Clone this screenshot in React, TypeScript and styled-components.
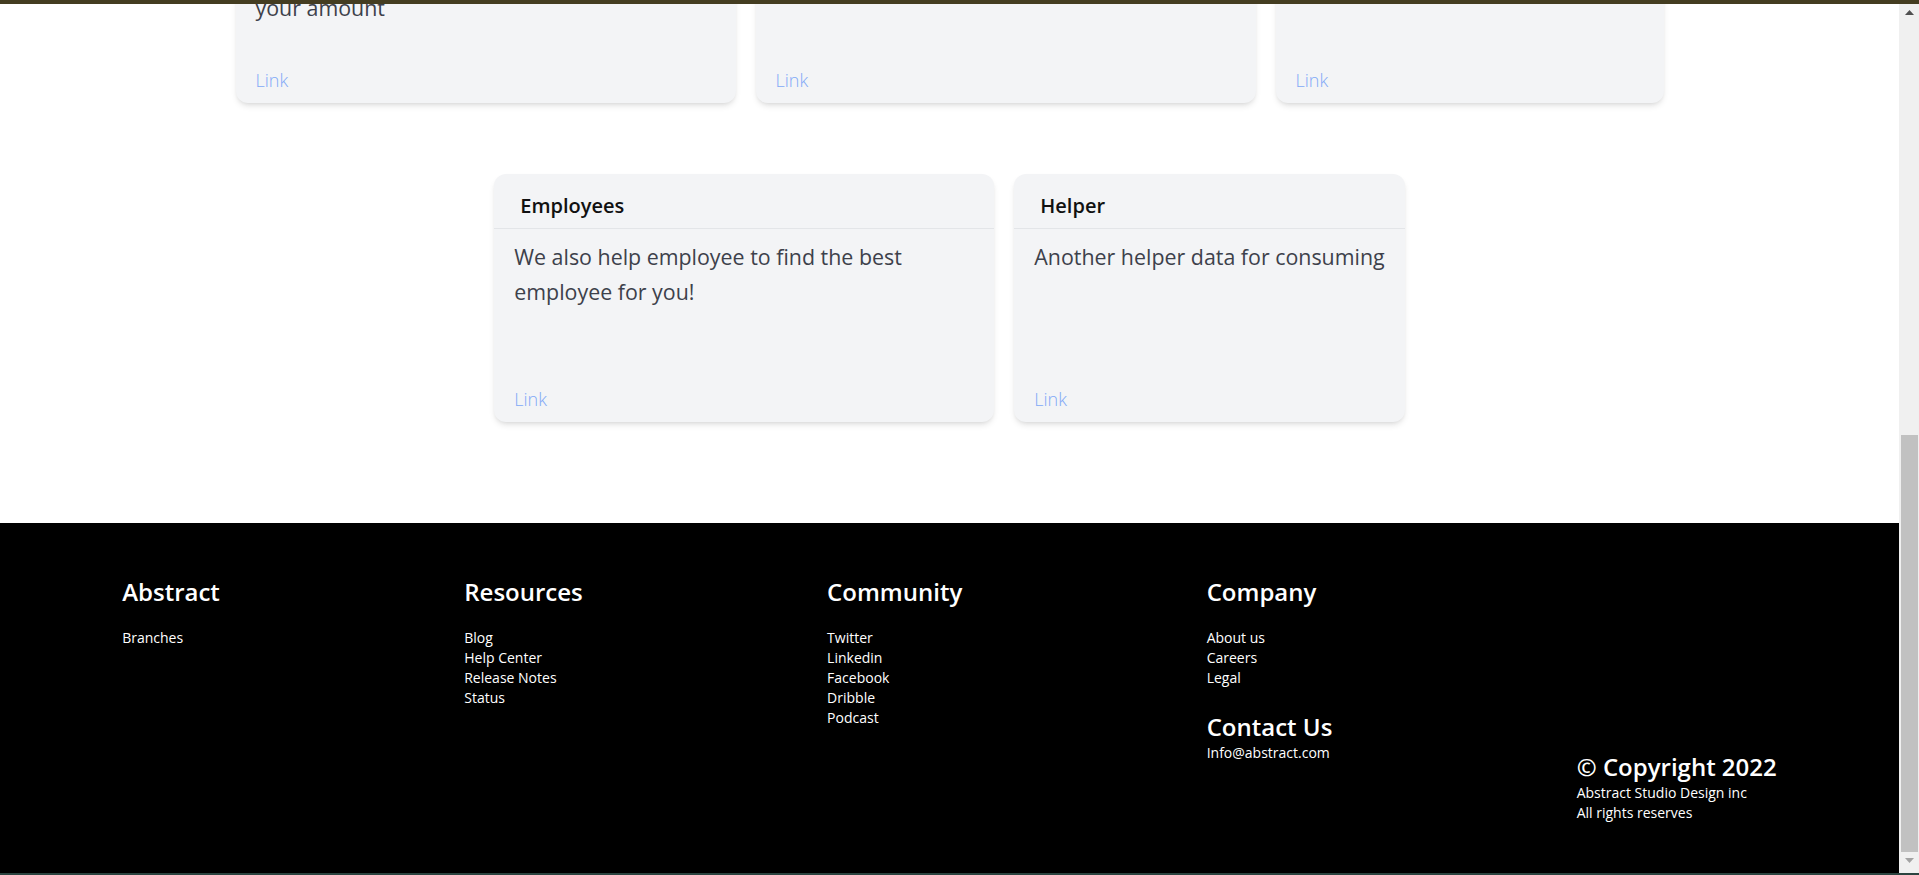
import React from 'react';
import styled, { createGlobalStyle } from 'styled-components';

const GlobalStyle = createGlobalStyle`
  html, body {
    margin: 0;
    padding: 0;
    height: 100%;
    overflow: hidden;
    background: #ffffff;
  }
  body {
    font-family: 'Segoe UI', 'Open Sans', 'Noto Sans', sans-serif;
  }
  * {
    box-sizing: border-box;
  }
`;

const Screen = styled.div`
  width: 1919px;
  height: 875px;
  display: flex;
  flex-direction: column;
`;

const TopEdge = styled.div`
  flex-shrink: 0;
  height: 4px;
  background: #443d21;
`;

const BottomEdge = styled.div`
  flex-shrink: 0;
  height: 2px;
  background: #2b4440;
`;

const Window = styled.div`
  flex: 1;
  min-height: 0;
  display: flex;
`;

/* content is anchored to the bottom: the page is scrolled to its end */
const Viewport = styled.main`
  flex: 1;
  min-width: 0;
  display: flex;
  flex-direction: column;
  justify-content: flex-end;
  overflow: hidden;
  background: #ffffff;
  > * {
    flex-shrink: 0;
  }
`;

const Scrollbar = styled.div`
  width: 20px;
  flex-shrink: 0;
  display: flex;
  flex-direction: column;
  background: #f0f0f0;
`;

const ScrollArrow = styled.div<{ $muted?: boolean }>`
  height: 17px;
  display: flex;
  align-items: ${p => (p.$muted ? 'flex-start' : 'center')};
  justify-content: center;
  padding-top: ${p => (p.$muted ? '2px' : '0')};
  color: ${p => (p.$muted ? '#a3a3a3' : '#505050')};
`;

const ScrollTrack = styled.div`
  flex: 1;
  display: flex;
  flex-direction: column;
  justify-content: flex-end;
  padding: 0 1px 4px 2px;
`;

const ScrollThumb = styled.div<{ $size: number }>`
  height: ${p => p.$size}px;
  background: #c1c1c1;
`;

const Services = styled.section`
  width: 100%;
  max-width: 1460px;
  margin: 0 auto;
  padding: 40px 0 101px;
  display: flex;
  flex-wrap: wrap;
  justify-content: center;
  column-gap: 20px;
  row-gap: 71px;
`;

const Card = styled.article<{ $width?: number }>`
  width: ${p => (p.$width ? `${p.$width}px` : 'auto')};
  max-width: 500px;
  height: 248px;
  display: flex;
  flex-direction: column;
  background: #f3f4f6;
  border-radius: 12px;
  box-shadow: 0 4px 6px -1px rgba(0, 0, 0, 0.1), 0 2px 4px -2px rgba(0, 0, 0, 0.1);
`;

const CardHeader = styled.h2`
  margin: 0;
  padding: 18px 26px 8px;
  border-bottom: 1px solid #e3e5e8;
  font-size: 20px;
  line-height: 28px;
  font-weight: 600;
  color: #111111;
`;

const CardText = styled.p`
  flex: 1;
  margin: 0;
  padding: 10px 20px 0;
  font-size: 21.4px;
  line-height: 35px;
  font-weight: 400;
  color: #3d414b;
`;

const CardLink = styled.a`
  padding: 0 20px 9px;
  font-size: 18px;
  line-height: 28px;
  font-weight: 300;
  color: #82a9f6;
  text-decoration: none;
`;

const Footer = styled.footer`
  display: flex;
  justify-content: space-around;
  align-items: flex-start;
  padding: 53px 0 50px;
  background: #000000;
  color: #ffffff;
`;

const FooterColumn = styled.div<{ $offset?: number }>`
  display: flex;
  flex-direction: column;
  margin-top: ${p => p.$offset ?? 0}px;
`;

const FooterTitle = styled.h3<{ $gap?: number; $space?: number }>`
  margin: ${p => p.$space ?? 0}px 0 ${p => p.$gap ?? 20}px;
  font-size: 24px;
  line-height: 32px;
  font-weight: 600;
`;

const FooterLink = styled.a`
  display: block;
  font-size: 14px;
  line-height: 20px;
  color: #ffffff;
  text-decoration: none;
`;

const FooterNote = styled.span`
  display: block;
  font-size: 14px;
  line-height: 20px;
`;

const services = [
  {
    title: 'Calculation',
    width: 500,
    text: ['We help you to count the expenses and', 'taxes of your company and calculate', 'your amount'],
  },
  { title: 'Business', width: 500, text: ['Grow your business with the help of', 'our best experts'] },
  { title: 'Finance', width: 388, text: ['Manage all of your finance easily'] },
  { title: 'Employees', text: ['We also help employee to find the best employee for you!'] },
  { title: 'Helper', text: ['Another helper data for consuming'] },
];

const columns = [
  { title: 'Abstract', links: ['Branches'] },
  { title: 'Resources', links: ['Blog', 'Help Center', 'Release Notes', 'Status'] },
  { title: 'Community', links: ['Twitter', 'Linkedin', 'Facebook', 'Dribble', 'Podcast'] },
];

const Arrow = ({ down }: { down?: boolean }) => (
  <svg width="9" height="5" viewBox="0 0 9 5">
    <polygon points={down ? '0,0 9,0 4.5,5' : '0,5 9,5 4.5,0'} fill="currentColor" />
  </svg>
);

export default function App() {
  return (
    <Screen>
      <GlobalStyle />
      <TopEdge />
      <Window>
        <Viewport>
          <Services>
            {services.map(s => (
              <Card key={s.title} $width={s.width}>
                <CardHeader>{s.title}</CardHeader>
                <CardText>
                  {s.text.map((line, i) => (
                    <React.Fragment key={i}>
                      {i > 0 && <br />}
                      {line}
                    </React.Fragment>
                  ))}
                </CardText>
                <CardLink href="#">Link</CardLink>
              </Card>
            ))}
          </Services>
          <Footer>
            {columns.map(c => (
              <FooterColumn key={c.title}>
                <FooterTitle>{c.title}</FooterTitle>
                {c.links.map(l => (
                  <FooterLink key={l} href="#">{l}</FooterLink>
                ))}
              </FooterColumn>
            ))}
            <FooterColumn>
              <FooterTitle>Company</FooterTitle>
              <FooterLink href="#">About us</FooterLink>
              <FooterLink href="#">Careers</FooterLink>
              <FooterLink href="#">Legal</FooterLink>
              <FooterTitle $space={23} $gap={0}>Contact Us</FooterTitle>
              <FooterLink href="#">Info@abstract.com</FooterLink>
            </FooterColumn>
            <FooterColumn $offset={175}>
              <FooterTitle $gap={0}>© Copyright 2022</FooterTitle>
              <FooterNote>Abstract Studio Design inc</FooterNote>
              <FooterNote>All rights reserves</FooterNote>
            </FooterColumn>
          </Footer>
        </Viewport>
        <Scrollbar>
          <ScrollArrow>
            <Arrow />
          </ScrollArrow>
          <ScrollTrack>
            <ScrollThumb $size={417} />
          </ScrollTrack>
          <ScrollArrow $muted>
            <Arrow down />
          </ScrollArrow>
        </Scrollbar>
      </Window>
      <BottomEdge />
    </Screen>
  );
}
